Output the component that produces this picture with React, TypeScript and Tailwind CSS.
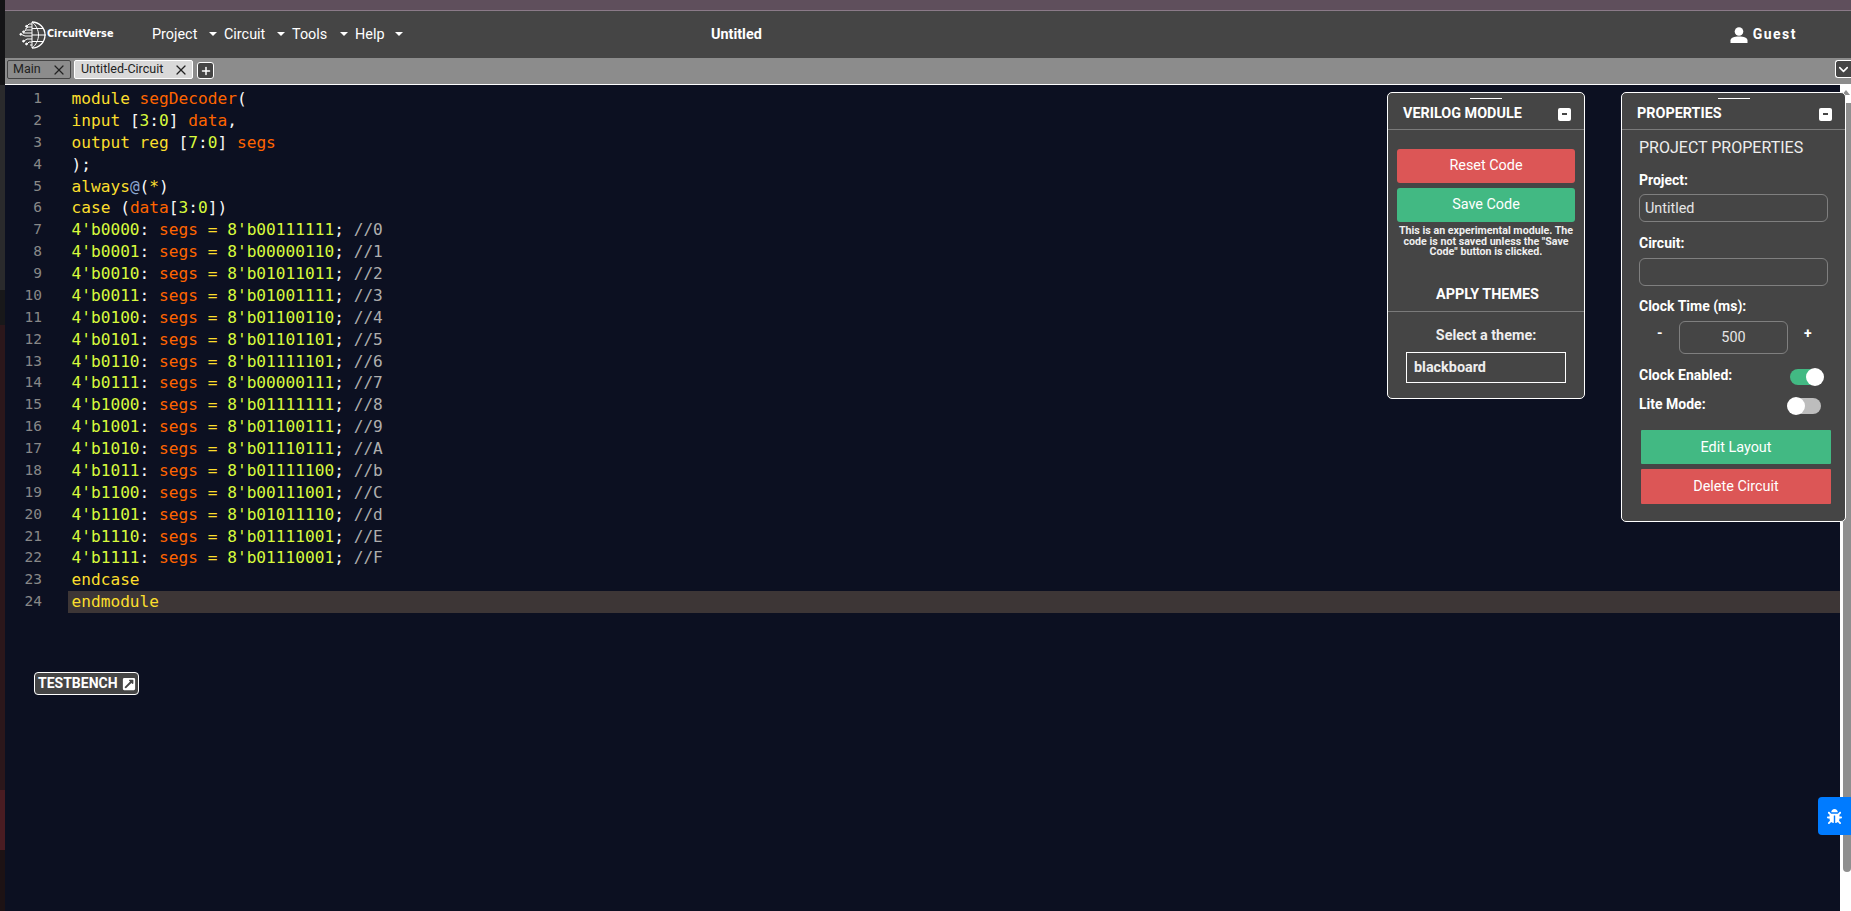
import React from "react";
import { X, Plus, ChevronDown } from "lucide-react";
import { FaBug, FaExternalLinkSquareAlt } from "react-icons/fa";

type Seg = [string, string];
const K = "text-[#fbde2d]";
const V = "text-[#ff6400]";
const N = "text-[#d8fa3c]";
const W = "text-[#f8f8f8]";
const B = "text-[#8da6ce]";
const C = "text-[#aeaeae]";

const caseLine = (a: string, b: string, c: string): Seg[] => [
  [a, N], [": ", W], ["segs", V], [" ", W], ["=", K], [" ", W], [b, N], [";", W], [" ", W], ["//" + c, C],
];

const lines: Seg[][] = [
  [["module", K], [" ", W], ["segDecoder", V], ["(", W]],
  [["input", K], [" ", W], ["[", W], ["3", N], [":", W], ["0", N], ["]", W], [" ", W], ["data", V], [",", W]],
  [["output", K], [" ", W], ["reg", K], [" ", W], ["[", W], ["7", N], [":", W], ["0", N], ["]", W], [" ", W], ["segs", V]],
  [[");", W]],
  [["always", K], ["@", B], ["(", W], ["*", K], [")", W]],
  [["case", K], [" ", W], ["(", W], ["data", V], ["[", W], ["3", N], [":", W], ["0", N], ["]", W], [")", W]],
  caseLine("4'b0000", "8'b00111111", "0"),
  caseLine("4'b0001", "8'b00000110", "1"),
  caseLine("4'b0010", "8'b01011011", "2"),
  caseLine("4'b0011", "8'b01001111", "3"),
  caseLine("4'b0100", "8'b01100110", "4"),
  caseLine("4'b0101", "8'b01101101", "5"),
  caseLine("4'b0110", "8'b01111101", "6"),
  caseLine("4'b0111", "8'b00000111", "7"),
  caseLine("4'b1000", "8'b01111111", "8"),
  caseLine("4'b1001", "8'b01100111", "9"),
  caseLine("4'b1010", "8'b01110111", "A"),
  caseLine("4'b1011", "8'b01111100", "b"),
  caseLine("4'b1100", "8'b00111001", "C"),
  caseLine("4'b1101", "8'b01011110", "d"),
  caseLine("4'b1110", "8'b01111001", "E"),
  caseLine("4'b1111", "8'b01110001", "F"),
  [["endcase", K]],
  [["endmodule", K]],
];

function Logo() {
  return (
    <svg width="30" height="30" viewBox="0 0 30 30" fill="none" stroke="#fff" strokeWidth="1" className="shrink-0">
      <path d="M15 2a13 13 0 1 1 0 26" strokeWidth="1.300" />
      <path d="M15 2c4 3 6.500 8 6.500 13s-2.500 10-6.500 13" />
      <path d="M15 2v26M15 8.500h11.500M15 15h14M15 21.500h11.500" />
      <path d="M15 4h-3l-2 2M15 7h-4l-3 2.500M15 10H9l-2 1.500M15 13H6M15 16H8l-3.500-1.500M15 19h-5l-3 2M15 22h-3l-2 2M15 25h-2" />
      <circle cx="9.500" cy="6.300" r="0.900" fill="#fff" />
      <circle cx="6.500" cy="11.800" r="0.900" fill="#fff" />
      <circle cx="3.800" cy="14.300" r="0.900" fill="#fff" />
      <circle cx="6.500" cy="21.200" r="0.900" fill="#fff" />
      <circle cx="9.500" cy="24" r="0.900" fill="#fff" />
    </svg>
  );
}

function NavItem({ label, w }: { label: string; w: string }) {
  return (
    <div className={`flex items-center justify-between text-[14.4px] text-white ${w}`}>
      <span>{label}</span>
      <span className="mr-[7px] h-0 w-0 border-x-[4px] border-t-[4px] border-x-transparent border-t-white" />
    </div>
  );
}

function PanelHeader({ title }: { title: string }) {
  return (
    <>
      <div className="mx-auto mt-[5px] h-px w-[32px] bg-white" />
      <div className="flex h-[31px] items-center justify-between border-b border-[#7a7a7a] pl-[15px] pr-[13px]">
        <span className="text-[14.4px] font-bold text-white">{title}</span>
        <span className="flex h-[13px] w-[13px] items-center justify-center rounded-[2px] bg-white">
          <span className="h-[2px] w-[5px] bg-[#454545]" />
        </span>
      </div>
    </>
  );
}

function Toggle({ on }: { on: boolean }) {
  return (
    <div className={`relative h-[16px] w-[30px] rounded-full ${on ? "bg-[#42b983]" : "bg-[#bdbdbd]"}`}>
      <div className={`absolute top-[-1px] h-[18px] w-[18px] rounded-full bg-white ${on ? "right-[-4px]" : "left-[-4px]"}`} />
    </div>
  );
}

function Button({ color, children, round }: { color: string; children: string; round?: boolean }) {
  return (
    <div className={`flex items-center justify-center text-[14.4px] text-white ${color} ${round ? "rounded-[3px]" : "rounded-[1px] pt-[1px]"}`}>
      {children}
    </div>
  );
}

function LeftStrip() {
  return (
    <div className="flex h-full w-[5px] shrink-0 flex-col">
      <div className="h-[85px] bg-[#141416]" />
      <div className="h-[205px] bg-[#2a2a2c]" />
      <div className="h-[35px] bg-[#18181a]" />
      <div className="h-[465px] bg-[#2c171b]" />
      <div className="h-[60px] bg-[#4a1c22]" />
      <div className="flex-1 bg-[#1d1214]" />
    </div>
  );
}

export default function App() {
  return (
    <div className="relative flex h-[911px] w-[1851px] overflow-hidden bg-[#0c1021] font-['Roboto',sans-serif]">
      <LeftStrip />
      <div className="flex min-w-0 flex-1 flex-col">
        <div className="h-[11px] border-b border-[#8a7a88] bg-[#5f4f5c]" />
        <header className="flex h-[47px] items-center bg-[#454545]">
          <div className="ml-[12px] flex w-[135px] items-center">
            <Logo />
            <span className="font-['DejaVu_Sans',sans-serif] text-[9.700px] font-bold text-white">CircuitVerse</span>
          </div>
          <NavItem label="Project" w="w-[72px]" />
          <NavItem label="Circuit" w="w-[68px]" />
          <NavItem label="Tools" w="w-[63px]" />
          <NavItem label="Help" w="w-[55px]" />
          <div className="ml-[301px] text-[14.4px] font-bold text-white">Untitled</div>
          <div className="ml-auto mr-[54px] flex items-center gap-[5px]">
            <svg width="18" height="16" viewBox="0 0 18 16" fill="#fff">
              <circle cx="9" cy="4.500" r="4.300" />
              <path d="M0.500 16v-2.500C0.500 10.800 4 9.500 9 9.500s8.500 1.300 8.500 4V16z" />
            </svg>
            <span className="text-[14px] font-bold tracking-[1.500px] text-white">Guest</span>
          </div>
        </header>
        <div className="flex h-[26px] items-start bg-[#8c8c8c] pl-[2px] pt-[2px] text-[12.500px]">
          <div className="flex h-[19px] w-[64px] items-center justify-between rounded-[2px] border border-[#444] pl-[5px] pr-[3px] text-[#222]">
            <span>Main</span>
            <X size={16} strokeWidth={1.800} />
          </div>
          <div className="ml-[3px] flex h-[19px] w-[119px] items-center justify-between rounded-[2px] border border-white bg-[#d9d9d9] pl-[6px] pr-[3px] text-[#222]">
            <span>Untitled-Circuit</span>
            <X size={16} strokeWidth={1.800} />
          </div>
          <div className="ml-[4px] mt-[2px] flex h-[17px] w-[17px] items-center justify-center rounded-[3px] border border-white bg-[#454545]">
            <Plus size={12} strokeWidth={3} className="text-white" />
          </div>
          <div className="ml-auto flex h-[18px] w-[16px] items-center justify-center rounded-l-[3px] border border-r-0 border-white bg-[#454545]">
            <ChevronDown size={17} strokeWidth={2.500} className="text-white" />
          </div>
        </div>
        <div className="h-px bg-white" />
        <div className="flex min-h-0 flex-1">
          <main className="flex min-w-0 flex-1 pt-[3px] font-['DejaVu_Sans_Mono',monospace] text-[16.160px] leading-[21.870px]">
            <div className="w-[37px] shrink-0 text-right text-[14.500px] text-[#888]">
              {lines.map((_, i) => (
                <div key={i}>{i + 1}</div>
              ))}
            </div>
            <div className="ml-[26px] min-w-0 flex-1">
              {lines.map((line, i) => (
                <div key={i} className={`whitespace-pre pl-[3.500px] ${i === 23 ? "bg-[#3d3636]" : ""}`}>
                  {line.map(([t, c], j) => (
                    <span key={j} className={c}>{t}</span>
                  ))}
                </div>
              ))}
            </div>
          </main>
          <div className="flex w-[11px] shrink-0 flex-col items-end bg-white">
            <div className="mr-[1px] mt-[5px] h-0 w-0 border-x-[4px] border-b-[5px] border-x-transparent border-b-[#8f8f8f]" />
            <div className="mb-[39px] mt-[8px] w-[8px] flex-1 rounded-b-[4px] bg-[#8f8f8f]" />
          </div>
        </div>
      </div>

      {/* Verilog panel */}
      <section className="absolute left-[1387px] top-[92px] flex h-[307px] w-[198px] flex-col rounded-[5px] border border-white bg-[#454545] text-white">
        <PanelHeader title="VERILOG MODULE" />
        <div className="mx-[9px] mt-[19px] grid grid-rows-[34px_34px] gap-[5px]">
          <Button color="bg-[#dc5656]" round>Reset Code</Button>
          <Button color="bg-[#42b983]" round>Save Code</Button>
        </div>
        <p className="mx-[9px] mt-[4px] h-[32px] text-center text-[10.700px] font-bold leading-[10.500px] text-[#eee]">
          This is an experimental module. The code is not saved unless the "Save Code" button is clicked.
        </p>
        <div className="mt-[26px] pl-[3px] text-center text-[14.4px] font-bold leading-[21px]">APPLY THEMES</div>
        <div className="mt-[6px] border-t border-[#7a7a7a]" />
        <div className="mt-[14px] text-center text-[14.4px] font-bold leading-[20px] text-[#eee]">Select a theme:</div>
        <div className="mx-[18px] mt-[6px] flex h-[31px] items-center border border-white pl-[7px] text-[14.4px] font-bold text-[#eee]">blackboard</div>
      </section>

      {/* Properties panel */}
      <section className="absolute left-[1621px] top-[92px] flex h-[430px] w-[225px] flex-col rounded-[5px] border border-white bg-[#454545] text-white">
        <PanelHeader title="PROPERTIES" />
        <div className="ml-[17px] mt-[8px] text-[16px] leading-[20px] text-[#eee]">PROJECT PROPERTIES</div>
        <label className="ml-[17px] mt-[13px] text-[14px] font-bold leading-[18px]">Project:</label>
        <div className="mx-[17px] mt-[5px] flex h-[28px] items-center rounded-[6px] border border-[#7f7f7f] pl-[5px] pt-[1px] text-[14.4px] text-[#e5e5e5]">Untitled</div>
        <label className="ml-[17px] mt-[12px] text-[14px] font-bold leading-[18px]">Circuit:</label>
        <div className="mx-[17px] mt-[6px] h-[28px] rounded-[6px] border border-[#7f7f7f]" />
        <label className="ml-[17px] mt-[11px] text-[14px] font-bold leading-[18px]">Clock Time (ms):</label>
        <div className="mt-[6px] flex items-center">
          <span className="ml-[35px] w-[22px] pb-[8px] text-[14px] font-bold">-</span>
          <div className="flex h-[33px] w-[109px] items-center justify-center rounded-[6px] border border-[#7f7f7f] text-[14.4px] text-[#e5e5e5]">500</div>
          <span className="ml-[16px] pb-[8px] text-[14px] font-bold">+</span>
        </div>
        <div className="mt-[11px] flex h-[20px] items-center justify-between pl-[17px] pr-[25px]">
          <span className="text-[14px] font-bold">Clock Enabled:</span>
          <div className="mt-[4px]"><Toggle on /></div>
        </div>
        <div className="mt-[9px] flex h-[20px] items-center justify-between pl-[17px] pr-[24px]">
          <span className="text-[14px] font-bold">Lite Mode:</span>
          <div className="mt-[3px]"><Toggle on={false} /></div>
        </div>
        <div className="ml-[19px] mr-[14px] mt-[16px] grid grid-rows-[34px_35px] gap-[5px]">
          <Button color="bg-[#42b983]">Edit Layout</Button>
          <Button color="bg-[#dc5656]">Delete Circuit</Button>
        </div>
      </section>

      {/* Testbench */}
      <div className="absolute left-[34px] top-[672px] flex h-[23px] w-[105px] items-center gap-[4px] rounded-[4px] border border-white bg-[#454545] pl-[3px] text-[14px] font-bold text-white">
        <span>TESTBENCH</span>
        <FaExternalLinkSquareAlt size={14} />
      </div>

      {/* Report bug */}
      <div className="absolute left-[1818px] top-[797px] flex h-[38px] w-[33px] items-center justify-center rounded-l-[4px] bg-[#007bff]">
        <FaBug size={15} className="text-white" />
      </div>
    </div>
  );
}
